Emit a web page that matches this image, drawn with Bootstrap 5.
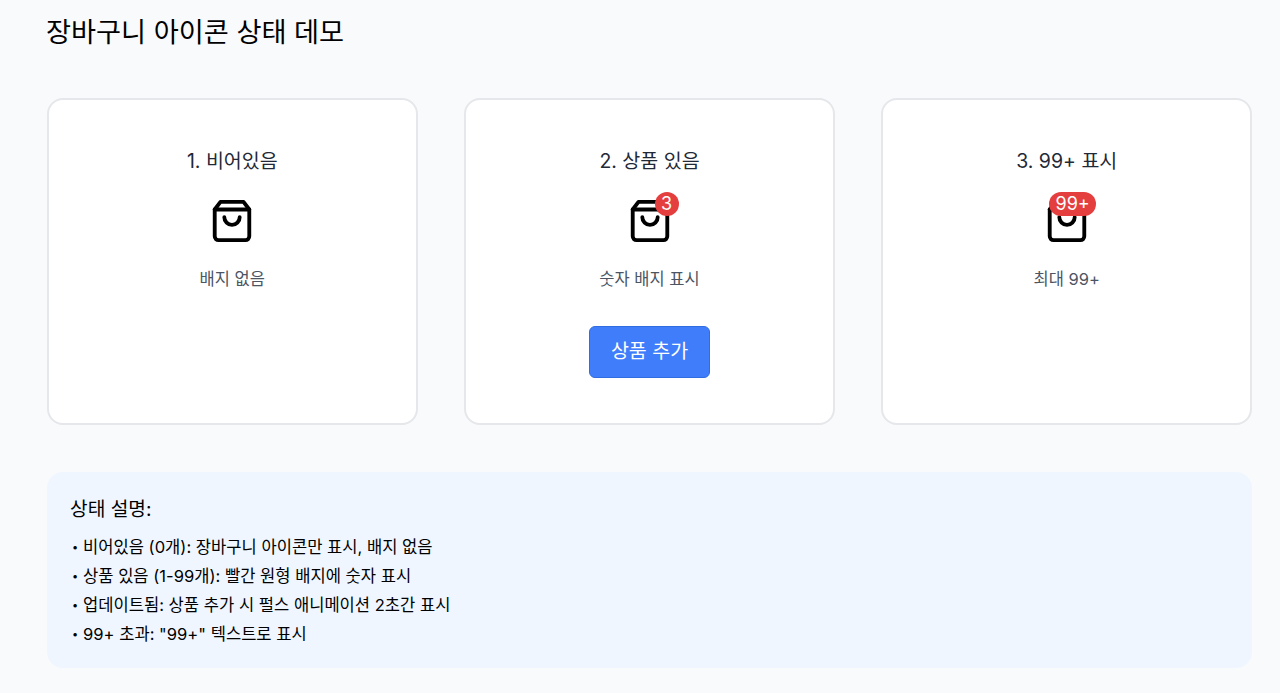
<!DOCTYPE html>
<html lang="ko">
<head>
    <meta charset="UTF-8">
    <meta name="viewport" content="width=device-width, initial-scale=1.0">
    <title>장바구니 아이콘 상태 데모</title>
    <link href="https://cdn.jsdelivr.net/npm/bootstrap@5.3.0/dist/css/bootstrap.min.css" rel="stylesheet">
    <script src="https://cdn.jsdelivr.net/npm/bootstrap@5.3.0/dist/js/bootstrap.bundle.min.js"></script>
    <style>
        body {
            background: #f9fafb;
            font-family: Inter, "Noto Sans CJK KR", sans-serif;
            overflow: hidden;
        }
        .demo-page {
            padding: 15px 28px 0 47px;
        }
        .demo-title {
            font-size: 27.2px;
            line-height: 36px;
            font-weight: 400;
            color: #000;
            margin: 0 0 47px -1px;
        }
        .demo-cards {
            gap: 46.67px;
        }
        .state-card {
            width: 370.67px;
            height: 327px;
            background: #fff;
            border: 2px solid #e5e7eb;
            border-radius: 16px;
            padding-top: 47px;
        }
        .state-title {
            font-size: 19.5px;
            line-height: 28px;
            font-weight: 400;
            color: #1f2937;
            margin: 0 0 22px;
        }
        .cart-wrap {
            position: relative;
            width: 48px;
            height: 48px;
        }
        .cart-wrap svg {
            display: block;
        }
        .cart-count {
            position: absolute;
            top: -5px;
            right: -5px;
            min-width: 24px;
            height: 24px;
            padding: 0 6px;
            background: #e53e3e;
            color: #fff;
            border-radius: 12px;
            font-size: 18px;
            line-height: 24px;
            text-align: center;
        }
        .state-note {
            font-size: 16.5px;
            line-height: 24px;
            color: #4b5563;
            margin: 22px 0 0;
        }
        .add-btn {
            width: 121px;
            height: 52px;
            margin-top: 35px;
            background: #407dfa;
            border: 1px solid #2f6de0;
            border-radius: 6px;
            color: #fff;
            font-size: 19.5px;
            padding: 0;
        }
        .add-btn:hover {
            background: #2f6de0;
            color: #fff;
        }
        .info-box {
            width: 1205px;
            height: 196px;
            margin-top: 47px;
            padding: 23px;
            background: #eff6ff;
            border-radius: 16px;
            color: #000;
        }
        .info-title {
            font-size: 19.2px;
            line-height: 28px;
            font-weight: 400;
            margin: 0 0 10px;
        }
        .info-list {
            font-size: 16.57px;
        }
        .info-list li {
            height: 29px;
            line-height: 29px;
        }
        .info-list li::before {
            content: "•";
            display: inline-block;
            width: 13px;
            padding-left: 2px;
            font-size: 11px;
            line-height: 1;
            vertical-align: 2px;
        }
    </style>
</head>
<body>
    <div class="demo-page">
        <h1 class="demo-title">장바구니 아이콘 상태 데모</h1>

        <div class="d-flex demo-cards">
            <!-- Empty -->
            <div class="state-card d-flex flex-column align-items-center">
                <h2 class="state-title">1. 비어있음</h2>
                <div class="cart-wrap">
                    <svg width="48" height="48" viewBox="-0.5 -0.5 25 25" fill="none" stroke="#000" stroke-width="2" stroke-linecap="round" stroke-linejoin="round"><path d="M6 2 3 6v14a2 2 0 0 0 2 2h14a2 2 0 0 0 2-2V6l-3-4z"/><path d="M3 6h18"/><path d="M16 10a4 4 0 0 1-8 0"/></svg>
                </div>
                <p class="state-note">배지 없음</p>
            </div>

            <!-- With items -->
            <div class="state-card d-flex flex-column align-items-center">
                <h2 class="state-title">2. 상품 있음</h2>
                <div class="cart-wrap">
                    <svg width="48" height="48" viewBox="-0.5 -0.5 25 25" fill="none" stroke="#000" stroke-width="2" stroke-linecap="round" stroke-linejoin="round"><path d="M6 2 3 6v14a2 2 0 0 0 2 2h14a2 2 0 0 0 2-2V6l-3-4z"/><path d="M3 6h18"/><path d="M16 10a4 4 0 0 1-8 0"/></svg>
                    <span class="cart-count" id="cartCount">3</span>
                </div>
                <p class="state-note">숫자 배지 표시</p>
                <button type="button" class="btn add-btn" id="addBtn">상품 추가</button>
            </div>

            <!-- Over 99 -->
            <div class="state-card d-flex flex-column align-items-center">
                <h2 class="state-title">3. 99+ 표시</h2>
                <div class="cart-wrap">
                    <svg width="48" height="48" viewBox="-0.5 -0.5 25 25" fill="none" stroke="#000" stroke-width="2" stroke-linecap="round" stroke-linejoin="round"><path d="M6 2 3 6v14a2 2 0 0 0 2 2h14a2 2 0 0 0 2-2V6l-3-4z"/><path d="M3 6h18"/><path d="M16 10a4 4 0 0 1-8 0"/></svg>
                    <span class="cart-count">99+</span>
                </div>
                <p class="state-note">최대 99+</p>
            </div>
        </div>

        <div class="info-box">
            <h3 class="info-title">상태 설명:</h3>
            <ul class="info-list list-unstyled mb-0">
                <li>비어있음 (0개): 장바구니 아이콘만 표시, 배지 없음</li>
                <li>상품 있음 (1-99개): 빨간 원형 배지에 숫자 표시</li>
                <li>업데이트됨: 상품 추가 시 펄스 애니메이션 2초간 표시</li>
                <li>99+ 초과: "99+" 텍스트로 표시</li>
            </ul>
        </div>
    </div>

    <script>
        // Add one item to the cart badge
        const cartCount = document.getElementById('cartCount');
        document.getElementById('addBtn').addEventListener('click', () => {
            const next = Number(cartCount.textContent) + 1;
            cartCount.textContent = next > 99 ? '99+' : next;
        });
    </script>
</body>
</html>
